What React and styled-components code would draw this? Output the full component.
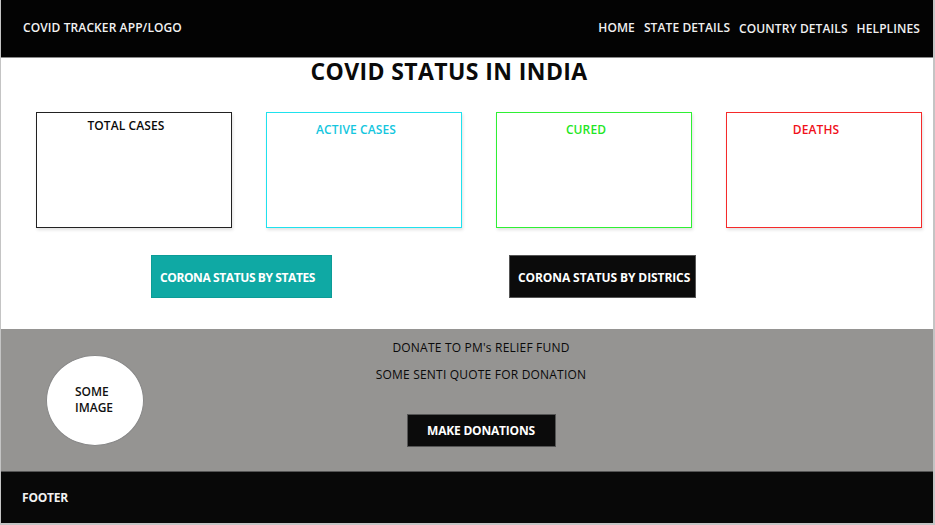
import React from "react";
import styled, { createGlobalStyle } from "styled-components";

const GlobalStyle = createGlobalStyle`
  * {
    box-sizing: border-box;
  }
  html, body {
    margin: 0;
    padding: 0;
    background: #ffffff;
    font-family: "Open Sans", "Noto Sans", sans-serif;
  }
`;

const cards = [
  { label: "TOTAL CASES", color: "#0a0a0a", border: "#222222", top: 12 },
  { label: "ACTIVE CASES", color: "#14c6de", border: "#1fe2ee", top: 16 },
  { label: "CURED", color: "#1fe625", border: "#2ff034", top: 16 },
  { label: "DEATHS", color: "#f0101a", border: "#f52a2a", top: 16 },
];

const App = () => {
  return (
    <>
      <GlobalStyle />
      <Frame>
        <Header>
          <Logo>COVID TRACKER APP/LOGO</Logo>
          <Nav>
            <NavLink>HOME</NavLink>
            <NavLink>STATE DETAILS</NavLink>
            <NavLink $low>COUNTRY DETAILS</NavLink>
            <NavLink $low>HELPLINES</NavLink>
          </Nav>
        </Header>

        <Main>
          <Title>COVID STATUS IN INDIA</Title>
          <Cards>
            {cards.map((c) => (
              <Card key={c.label} $border={c.border} $top={c.top}>
                <CardLabel $color={c.color}>{c.label}</CardLabel>
              </Card>
            ))}
          </Cards>
          <Actions>
            <ActionButton $bg="#0fa9a4" $border="#0c9c97" $width={181} $spacing={-0.4}>
              CORONA STATUS BY STATES
            </ActionButton>
            <ActionButton $bg="#0b0b0b" $border="#555555" $width={187} $spacing={-0.1}>
              CORONA STATUS BY DISTRICS
            </ActionButton>
          </Actions>
        </Main>

        <Donate>
          <ImageCircle>
            <span>SOME</span>
            <span>IMAGE</span>
          </ImageCircle>
          <DonateBody>
            <DonateText>DONATE TO PM's RELIEF FUND</DonateText>
            <DonateText>SOME SENTI QUOTE FOR DONATION</DonateText>
            <DonateButton>MAKE DONATIONS</DonateButton>
          </DonateBody>
        </Donate>

        <Footer>FOOTER</Footer>
      </Frame>
    </>
  );
};

const Frame = styled.div`
  width: 935px;
  height: 525px;
  display: flex;
  flex-direction: column;
  border: 1px solid #c4c4c4;
  border-top: none;
  border-right-width: 2px;
  overflow: hidden;
`;

const Header = styled.header`
  height: 58px;
  flex-shrink: 0;
  background: #030303;
  border-bottom: 1px solid #8a8a8a;
  display: flex;
  align-items: center;
  justify-content: space-between;
  padding: 0 13px 2px 22px;
  color: #f2f2f2;
`;

const Logo = styled.div`
  font-size: 12px;
  font-weight: 600;
  letter-spacing: 0.1px;
`;

const Nav = styled.nav`
  display: flex;
  gap: 9px;
`;

const NavLink = styled.a`
  font-size: 12px;
  font-weight: 600;
  letter-spacing: 0.1px;
  color: #f0f0f0;
  cursor: pointer;
  position: relative;
  top: ${(p) => (p.$low ? "1px" : "0")};
`;

const Main = styled.main`
  height: 271px;
  flex-shrink: 0;
  background: #ffffff;
  display: flex;
  flex-direction: column;
`;

const Title = styled.h1`
  margin: 0;
  padding-right: 36px;
  text-align: center;
  font-size: 23px;
  font-weight: 700;
  letter-spacing: 0.4px;
  line-height: 27px;
  color: #0a0a0a;
`;

const Cards = styled.div`
  display: grid;
  grid-template-columns: repeat(4, 196px);
  column-gap: 34px;
  padding-left: 35px;
  margin-top: 27px;
`;

const Card = styled.div`
  height: 116px;
  border: 1px solid ${(p) => p.$border};
  background: #ffffff;
  box-shadow: 1px 2px 3px rgba(0, 0, 0, 0.12);
  padding: ${(p) => p.$top - 7}px 16px 0 0;
  text-align: center;
`;

const CardLabel = styled.div`
  font-size: 12px;
  font-weight: 600;
  letter-spacing: 0.1px;
  line-height: 16px;
  color: ${(p) => p.$color};
`;

const Actions = styled.div`
  display: flex;
  gap: 177px;
  padding-left: 150px;
  margin-top: 27px;
`;

const ActionButton = styled.button`
  width: ${(p) => p.$width}px;
  height: 43px;
  background: ${(p) => p.$bg};
  border: 1px solid ${(p) => p.$border};
  color: #ffffff;
  font-family: inherit;
  font-size: 12px;
  font-weight: 700;
  letter-spacing: ${(p) => p.$spacing}px;
  text-align: left;
  padding: 1px 0 0 8px;
  cursor: pointer;
`;

const Donate = styled.section`
  height: 142px;
  flex-shrink: 0;
  background: #959492;
  display: grid;
  grid-template-columns: 145px 1fr 117px;
  align-items: center;
`;

const ImageCircle = styled.div`
  width: 98px;
  height: 91px;
  margin-left: 45px;
  border-radius: 50%;
  background: #ffffff;
  border: 1px solid #888888;
  display: flex;
  flex-direction: column;
  justify-content: center;
  padding-left: 28px;
  font-size: 12px;
  font-weight: 600;
  line-height: 16px;
  color: #111111;
`;

const DonateBody = styled.div`
  align-self: start;
  display: flex;
  flex-direction: column;
  align-items: center;
  padding-top: 10px;
`;

const DonateText = styled.div`
  font-size: 12px;
  font-weight: 500;
  letter-spacing: 0.2px;
  line-height: 18px;
  color: #0a0a0a;
  margin-bottom: 9px;
`;

const DonateButton = styled.button`
  margin-top: 21px;
  width: 149px;
  height: 33px;
  background: #0b0b0b;
  border: 1px solid #555555;
  color: #ffffff;
  font-family: inherit;
  font-size: 12px;
  font-weight: 700;
  letter-spacing: -0.2px;
  cursor: pointer;
`;

const Footer = styled.footer`
  height: 53px;
  flex-shrink: 0;
  background: #080808;
  border-top: 1px solid #555555;
  border-bottom: 1px solid #c4c4c4;
  display: flex;
  align-items: center;
  padding: 0 21px 1px;
  color: #f2f2f2;
  font-size: 12px;
  font-weight: 700;
  letter-spacing: -0.2px;
`;

export default App;
